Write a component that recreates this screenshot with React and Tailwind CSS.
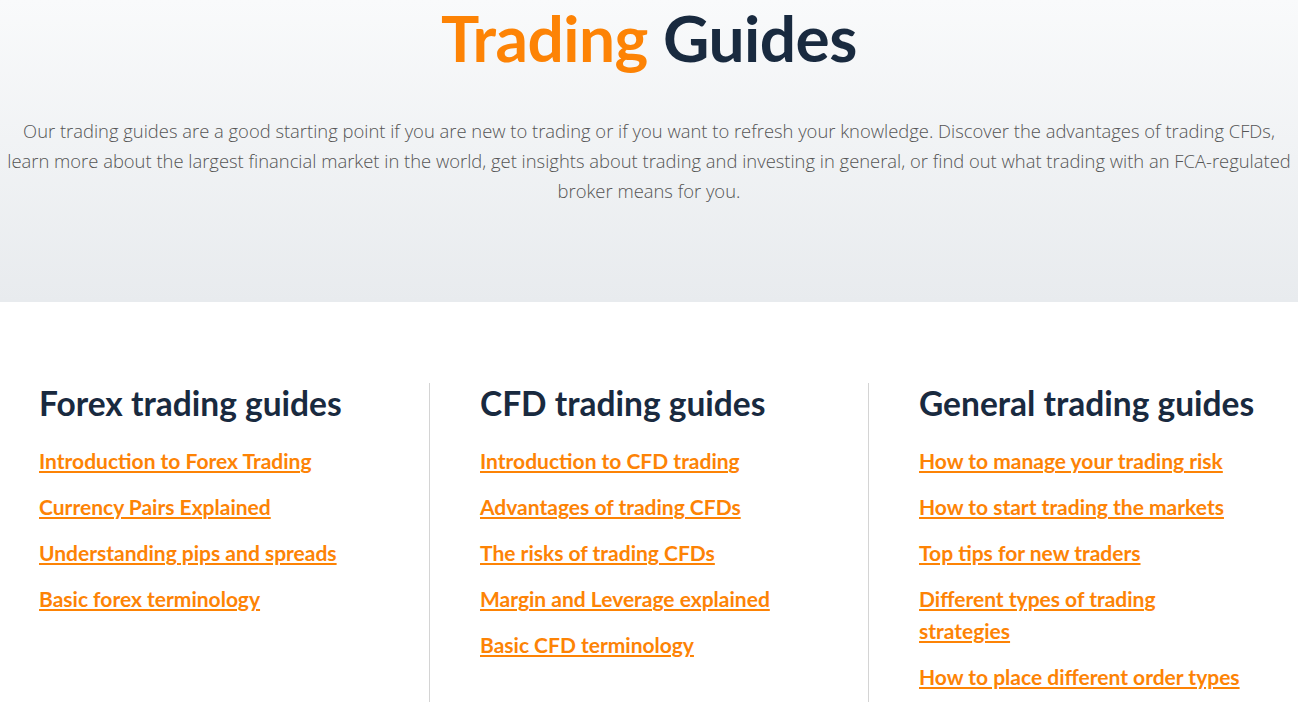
export default function App() {
  const head = { fontFamily: "Lato, 'Noto Sans', sans-serif" };
  const body = { fontFamily: "'Open Sans', Lato, sans-serif" };
  const cols = [
    {
      title: "Forex trading guides",
      links: [
        "Introduction to Forex Trading",
        "Currency Pairs Explained",
        "Understanding pips and spreads",
        "Basic forex terminology",
      ],
    },
    {
      title: "CFD trading guides",
      links: [
        "Introduction to CFD trading",
        "Advantages of trading CFDs",
        "The risks of trading CFDs",
        "Margin and Leverage explained",
        "Basic CFD terminology",
      ],
    },
    {
      title: "General trading guides",
      links: [
        "How to manage your trading risk",
        "How to start trading the markets",
        "Top tips for new traders",
        ["Different types of trading", "strategies"],
        "How to place different order types",
      ],
    },
  ];
  return (
    <div className="w-[1298px] h-[702px] overflow-hidden bg-white">
      <section className="h-[302px] bg-gradient-to-b from-[#f9fafb] to-[#e8ebee] flex flex-col items-center">
        <h1
          style={head}
          className="mt-[2px] text-[64px] leading-[72px] font-bold tracking-[-0.5px]"
        >
          <span className="text-[#fd8305]">Trading</span>{" "}
          <span className="text-[#192a3f]">Guides</span>
        </h1>
        <p
          style={body}
          className="mt-[42px] text-[18.4px] leading-[30px] font-light text-[#555555] text-center whitespace-nowrap"
        >
          Our trading guides are a good starting point if you are new to trading or if you want to refresh your knowledge. Discover the advantages of trading CFDs,
          <br />
          learn more about the largest financial market in the world, get insights about trading and investing in general, or find out what trading with an FCA-regulated
          <br />
          broker means for you.
        </p>
      </section>
      <section className="pt-[81px] flex">
        {cols.map((c, i) => (
          <div
            key={c.title}
            className={
              i === 0
                ? "w-[429px] pl-[39px] pr-[20px]"
                : i === 1
                ? "w-[439px] pl-[50px] pr-[20px] border-l border-[#d4d4d4]"
                : "flex-1 pl-[50px] pr-[10px] border-l border-[#d4d4d4]"
            }
          >
            <h2
              style={head}
              className="text-[33.5px] leading-[40px] font-bold text-[#192a3f] whitespace-nowrap"
            >
              {c.title}
            </h2>
            <ul className="mt-[22px] flex flex-col gap-[14px] pb-[30px]">
              {c.links.map((l, j) => (
                <li key={j}>
                  <a
                    href="#"
                    style={head}
                    className="text-[21px] leading-[32px] font-bold text-[#fd8305] underline decoration-2 underline-offset-[2px]"
                  >
                    {Array.isArray(l) ? (
                      <>
                        {l[0]}
                        <br />
                        {l[1]}
                      </>
                    ) : (
                      l
                    )}
                  </a>
                </li>
              ))}
            </ul>
          </div>
        ))}
      </section>
    </div>
  );
}
